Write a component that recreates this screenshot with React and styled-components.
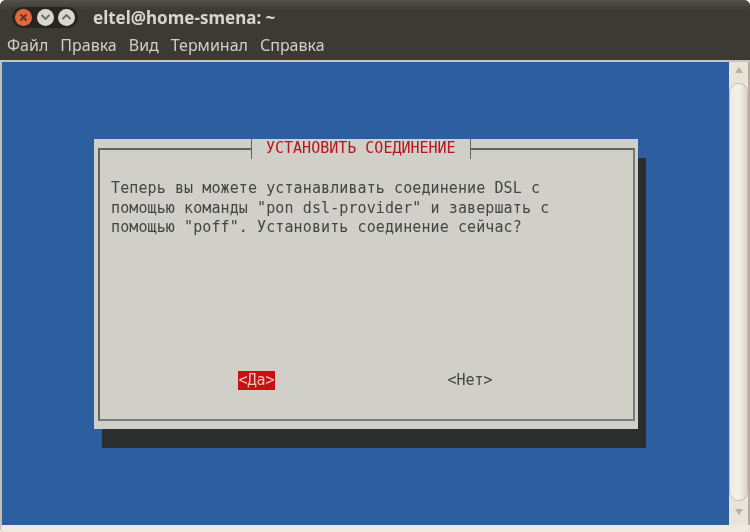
import styled, { createGlobalStyle } from "styled-components";

const Global = createGlobalStyle`
  html, body {
    margin: 0;
    background: #ffffff;
  }
`;

const Window = styled.div`
  width: 750px;
  height: 532px;
  box-sizing: border-box;
  display: flex;
  flex-direction: column;
  background: #3c3a35;
  border-radius: 6px 6px 4px 4px;
  overflow: hidden;
  filter: blur(0.55px);
`;

const TitleBar = styled.div`
  height: 32px;
  flex: none;
  display: flex;
  align-items: center;
  padding: 2px 0 0 12px;
  box-sizing: border-box;
  background: linear-gradient(#55524b, #3c3a35 30%);
`;

const Controls = styled.div`
  width: 66px;
  height: 21px;
  display: flex;
  align-items: center;
  justify-content: space-between;
  padding: 0 3px;
  box-sizing: border-box;
  border-radius: 11px;
  background: #27251f;
`;

const Circle = styled.div`
  width: 17px;
  height: 17px;
  border-radius: 50%;
  display: flex;
  align-items: center;
  justify-content: center;
  background: ${(p) => (p.$close ? "#e4663a" : "#d8d6cf")};
`;

const Title = styled.div`
  margin-left: 15px;
  font: bold 17px "Noto Sans", sans-serif;
  color: #d9d5c9;
`;

const MenuBar = styled.div`
  height: 28px;
  flex: none;
  display: flex;
  align-items: center;
  gap: 12px;
  padding: 0 0 2px 7px;
  box-sizing: border-box;
  font: 16px "Noto Sans", sans-serif;
  color: #d3cfc4;
`;

const Term = styled.div`
  flex: 1;
  display: flex;
  background: #efeadf;
  border-top: 2px solid #c9c5ba;
  border-left: 2px solid #c4bfb4;
  border-bottom: 7px solid #efeadf;
`;

const Screen = styled.div`
  width: 727px;
  box-sizing: border-box;
  background: #2d5e9f;
  padding: 77px 0 0 92px;
`;

const Dialog = styled.div`
  width: 544px;
  height: 290px;
  box-sizing: border-box;
  padding: 0 3px 8px 4px;
  background: #d0cfc8;
  box-shadow: 8px 19px 0 #2a2f2e;
  display: flex;
`;

const Frame = styled.fieldset`
  flex: 1;
  margin: 0;
  min-width: 0;
  padding: 0 10px 0 11px;
  display: flex;
  flex-direction: column;
  border-style: solid;
  border-width: 2px;
  border-color: #5f665f #7a7a75 #7a7a75 #5f665f;
`;

const Legend = styled.legend`
  margin-left: 140px;
  width: 220px;
  box-sizing: border-box;
  height: 20px;
  padding: 0 0 0 14px;
  border-left: 1.5px solid #5f665f;
  border-right: 1.5px solid #5f665f;
  text-align: left;
  font: 15px / 19px "DejaVu Sans Mono", monospace;
  color: #bb141c;
`;

const Message = styled.div`
  margin-top: 20px;
  font: 15px / 19.5px "DejaVu Sans Mono", monospace;
  letter-spacing: 0.1px;
  color: #434645;
  white-space: pre;
`;

const Buttons = styled.div`
  margin-top: 133px;
  padding-left: 127px;
  display: flex;
  gap: 172px;
  font: 15px / 19px "DejaVu Sans Mono", monospace;
`;

const Choice = styled.div`
  width: ${(p) => (p.$active ? "37px" : "46px")};
  box-sizing: border-box;
  text-align: center;
  background: ${(p) => (p.$active ? "#c80f14" : "transparent")};
  color: ${(p) => (p.$active ? "#e6c9b8" : "#434645")};
`;

const Scrollbar = styled.div`
  flex: 1;
  display: flex;
  flex-direction: column;
  align-items: center;
  padding-top: 5px;
  background: #e9e3d9;
  border-right: 2px solid #b5ad9f;
`;

const Arrow = styled.div`
  width: 0;
  height: 0;
  border-left: 4px solid transparent;
  border-right: 4px solid transparent;
  ${(p) => (p.$down ? "border-top" : "border-bottom")}: 6px solid #b7b0a3;
`;

const Thumb = styled.div`
  width: 100%;
  box-sizing: border-box;
  height: 418px;
  margin: 10px 0 8px;
  border-radius: 9px;
  border: 1px solid #c7bfb2;
  background: linear-gradient(90deg, #efe9df, #f6f2ea 50%, #dcd5c8);
`;

const Chevron = ({ up }) => (
  <svg width="11" height="8" viewBox="0 0 11 8">
    <path
      d={up ? "M1.5 6 5.5 2 9.5 6" : "M1.5 2 5.5 6 9.5 2"}
      fill="none"
      stroke="#6b6860"
      strokeWidth="1.8"
    />
  </svg>
);

const CloseMark = () => (
  <svg width="9" height="9" viewBox="0 0 9 9">
    <path d="M1.5 1.5 7.5 7.5M7.5 1.5 1.5 7.5" stroke="#5e3a2c" strokeWidth="2" />
  </svg>
);

const MENU = ["Файл", "Правка", "Вид", "Терминал", "Справка"];

const App = () => {
  return (
    <>
      <Global />
      <Window>
        <TitleBar>
          <Controls>
            <Circle $close>
              <CloseMark />
            </Circle>
            <Circle>
              <Chevron />
            </Circle>
            <Circle>
              <Chevron up />
            </Circle>
          </Controls>
          <Title>eltel@home-smena: ~</Title>
        </TitleBar>
        <MenuBar>
          {MENU.map((item) => (
            <span key={item}>{item}</span>
          ))}
        </MenuBar>
        <Term>
          <Screen>
            <Dialog>
              <Frame>
                <Legend>УСТАНОВИТЬ СОЕДИНЕНИЕ</Legend>
                <Message>
                  {`Теперь вы можете устанавливать соединение DSL с
помощью команды "pon dsl-provider" и завершать с
помощью "poff". Установить соединение сейчас?`}
                </Message>
                <Buttons>
                  <Choice $active>{"<Да>"}</Choice>
                  <Choice>{"<Нет>"}</Choice>
                </Buttons>
              </Frame>
            </Dialog>
          </Screen>
          <Scrollbar>
            <Arrow />
            <Thumb />
            <Arrow $down />
          </Scrollbar>
        </Term>
      </Window>
    </>
  );
};

export default App;
